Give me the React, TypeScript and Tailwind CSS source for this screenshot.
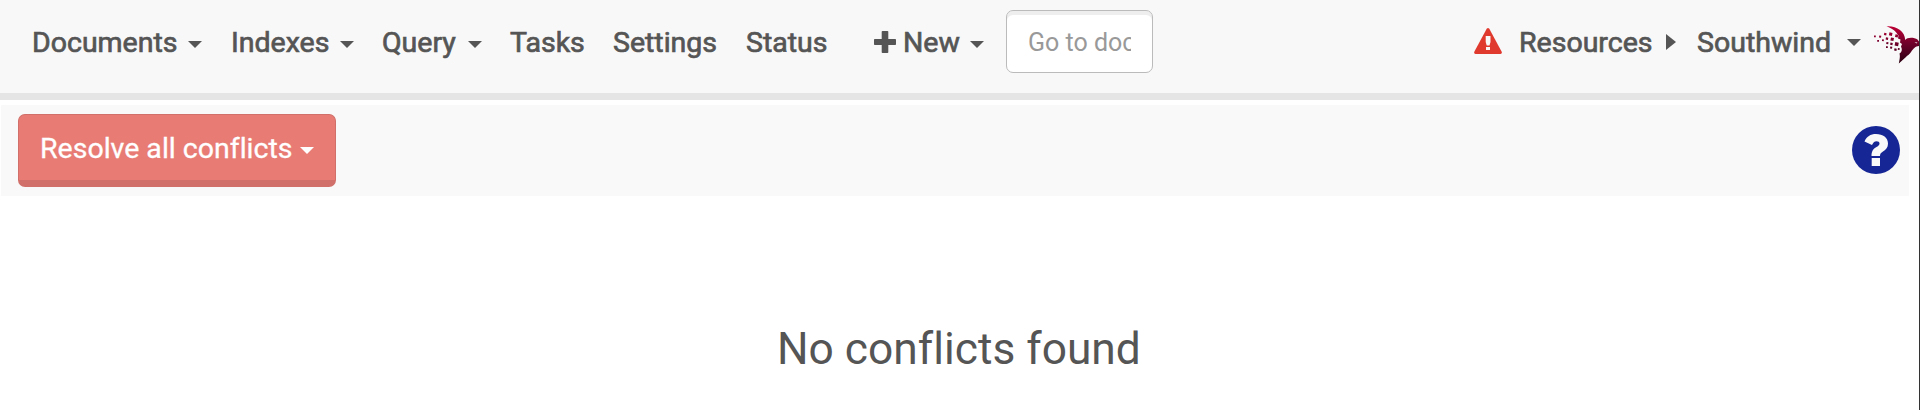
import React from "react";

const Caret = ({ className = "" }: { className?: string }) => (
  <svg className={`h-[7px] w-[14px] shrink-0 ${className}`} viewBox="0 0 14 7" fill="currentColor">
    <path d="M0 0h14L7 7z" />
  </svg>
);

const Item = ({ w, gap, children }: { w: string; gap: string; children: React.ReactNode }) => (
  <span className={`${w} ${gap} mb-[1px] shrink-0 whitespace-nowrap`}>{children}</span>
);

const Bird = () => (
  <svg className="mt-[3px] ml-[13px] h-[38px] w-[45px] shrink-0" viewBox="0 0 45 38">
    <defs>
      <linearGradient id="bird" x1="0" y1="0" x2="0" y2="38" gradientUnits="userSpaceOnUse">
        <stop offset="0" stopColor="#c00035" />
        <stop offset="0.45" stopColor="#70002a" />
        <stop offset="1" stopColor="#26000f" />
      </linearGradient>
    </defs>
    <g fill="url(#bird)">
      <path d="M12.500.3C22-.5 31 5 31.200 14 33 11 40 11 43.500 13.500L45 15.500v4.500c-4 .5-5 2-8 6-2 3-3 3-5 5l-7.200 6.500c.8-4 1.500-7 .7-10 2-1 2.500-3 2.200-5l-.7-2 1-2.500-2-1.500.5-3-2.500-1 .5-3C22 6 19 2.500 12.500.3z" />
      <path d="M0 9.500h1.800v1.800h-1.800zM5.300 9.500l2 .3-.3 2-2-.3zM10.300 6.800l2.300.4-.4 2.300-2.300-.4zM15.500 6.300l3 .6-.6 3-3-.6zM3.200 14h1.800v1.800h-1.800zM8.200 13.200l1.800.3-.3 1.800-1.800-.3zM12 11.300l2.300.4-.4 2.300-2.300-.4zM17 11.500l3 .6-.6 3-3-.6zM21.500 8.300l2.700.5-.5 2.700-2.700-.5zM12.500 16l2 .3-.3 2-2-.3zM16.500 16.500l2.300.4-.4 2.300-2.300-.4zM21.300 16l3.500.7-.7 3.500-3.500-.7zM12 20.300h1.800v1.800h-1.800zM16.300 20.500l2 .3-.3 2-2-.3zM20.500 22.300l2.300.4-.4 2.300-2.300-.4zM24 22l1.800.3-.3 1.800-1.800-.3z" />
    </g>
    <path d="M40.500 16l3 .5-1 1z" fill="#e9d5db" />
  </svg>
);

export default function App() {
  return (
    <div className="flex h-[410px] w-[1920px] overflow-hidden bg-white font-['Roboto',sans-serif] text-[#555] [font-variant-ligatures:none]">
      <div className="flex w-[1919px] shrink-0 flex-col overflow-hidden">
        <nav className="flex h-[100px] shrink-0 items-start border-b-[7px] border-[#e5e5e5] bg-[#f8f8f8] text-[28.500px] leading-[40px] font-normal [-webkit-text-stroke:0.7px_#555]">
          <div className="flex h-[86px] items-center">
            <Item w="w-[143px]" gap="ml-[32px]">Documents</Item>
            <Caret className="ml-[13px] mt-[3px]" />
            <Item w="w-[97px]" gap="ml-[29px]">Indexes</Item>
            <Caret className="ml-[12px] mt-[3px]" />
            <Item w="w-[74px]" gap="ml-[28px]">Query</Item>
            <Caret className="ml-[12px] mt-[3px]" />
            <Item w="w-[74px]" gap="ml-[28px]">Tasks</Item>
            <Item w="w-[104px]" gap="ml-[29px]">Settings</Item>
            <Item w="w-[83px]" gap="ml-[29px]">Status</Item>
            <svg className="ml-[45px] mb-[3px] h-[22px] w-[22px] shrink-0" viewBox="0 0 22 22" fill="currentColor">
              <path d="M8.500 0h5q.8 0 .8.800v7.200h6.900q.8 0 .8.800v4.400q0 .8-.8.800h-6.900v7.200q0 .8-.8.800h-5q-.8 0-.8-.8v-7.200H.8q-.8 0-.8-.8V8.800Q0 8 .8 8h6.900V.8q0-.8.800-.8z" />
            </svg>
            <Item w="w-[57px]" gap="ml-[7px]">New</Item>
            <Caret className="ml-[10px] mt-[3px]" />
          </div>
          <div className="mt-[10px] ml-[22px] h-[63px] w-[147px] shrink-0 rounded-[7px] border border-[#bbb] bg-white px-[21px] pt-[12px] text-[25px] text-[#999] shadow-[inset_0_4px_0_#eee] [-webkit-text-stroke:0px]">
            <div className="w-[103px] overflow-hidden whitespace-nowrap">Go to doc</div>
          </div>
          <div className="ml-[321px] flex h-[86px] items-center">
            <svg className="mb-[4px] h-[26px] w-[28px] shrink-0" viewBox="0 0 28 26">
              <path fill="#e0392d" d="M12.700.8q1.300-1.600 2.600 0L27.700 23.800q.7 2-1.200 2.200h-25q-1.900-.2-1.200-2.200z" />
              <path fill="#f8f8f8" d="M11.700 8h4.800v6l-1 3.500h-2.800l-1-3.500zM12 19h4v3h-4z" />
            </svg>
            <Item w="w-[133px]" gap="ml-[17px]">Resources</Item>
            <svg className="ml-[14px] mb-[2px] h-[16px] w-[10px] shrink-0" viewBox="0 0 10 16" fill="currentColor"><path d="M0 0l10 8-10 8z" /></svg>
            <Item w="w-[135px]" gap="ml-[21px]">Southwind</Item>
            <Caret className="ml-[15px] mb-[1px]" />
            <Bird />
          </div>
        </nav>
        <main>
          <section className="mt-[5px] ml-[1px] flex h-[91px] w-[1908px] items-start bg-[#f9f9f9]">
            <button className="mt-[9px] ml-[17px] flex h-[73px] w-[318px] items-center rounded-[7px] border border-b-[7px] border-[#d1706a] bg-[#e87c75] pl-[21px] text-left text-[28.500px] text-white">
              <span className="mt-[3px] w-[253px] whitespace-nowrap [-webkit-text-stroke:0.3px_#fff]">Resolve all conflicts</span>
              <Caret className="ml-[7px] mt-[6px]" />
            </button>
            <svg className="mt-[21px] ml-auto mr-[9px] h-[48px] w-[48px]" viewBox="0 0 48 48">
              <circle cx="24" cy="24" r="24" fill="#162795" />
              <path fill="#f9f9f9" d="M12.500 15.500C14.500 10.500 18.500 8 24 8c7 0 12 3.700 12 9.500 0 4-2 6.200-5 8-2 1.200-3 2.300-3 4.500h-8.500c0-4.500 1.500-7 5-9 2-1.200 3-2 3-3.500 0-1.300-1.200-2.200-3-2.200-2 0-3 1-4.500 3.700zM19.700 32h8.300v8h-8.300z" />
            </svg>
          </section>
          <h1 className="mt-[123px] ml-[777px] text-[44.300px] leading-[60px] font-normal whitespace-nowrap">No conflicts found</h1>
        </main>
      </div>
      <div className="w-[1px] shrink-0 bg-[#333]" />
    </div>
  );
}
